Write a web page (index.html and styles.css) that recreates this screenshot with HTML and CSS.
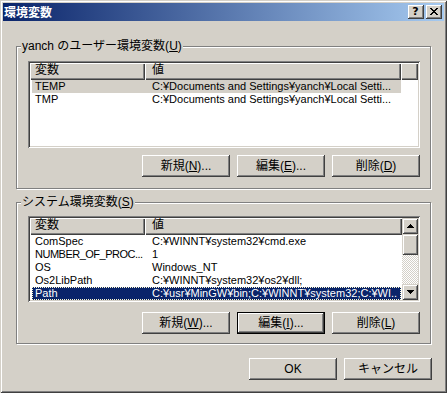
FILE: index.html
```html
<!DOCTYPE html>
<html lang="ja">
<head>
<meta charset="utf-8">
<title>環境変数</title>
<link rel="stylesheet" href="styles.css">
</head>
<body>
<div class="window">
  <div class="titlebar">
    <span class="title">環境変数</span>
    <div class="cbtns">
      <span class="cbtn q">?</span>
      <span class="cbtn">
        <svg width="8" height="7" viewBox="0 0 8 7"><path d="M0 0h2v1h-2zM6 0h2v1h-2zM1 1h2v1h-2zM5 1h2v1h-2zM2 2h4v1h-4zM3 3h2v1h-2zM2 4h4v1h-4zM1 5h2v1h-2zM5 5h2v1h-2zM0 6h2v1h-2zM6 6h2v1h-2z" fill="#000"/></svg>
      </span>
    </div>
  </div>
  <div class="client">
    <div class="group g1">
      <span class="glabel">yanch のユーザー環境変数(<u>U</u>)</span>
      <div class="list l1">
        <div class="lmain">
          <div class="lhead"><span class="hc c1">変数</span><span class="hc c2">値</span><span class="hc c3"></span></div>
          <div class="rows">
            <div class="row inactive"><span class="c1">TEMP</span><span class="c2">C:¥Documents and Settings¥yanch¥Local Setti...</span></div>
            <div class="row"><span class="c1">TMP</span><span class="c2">C:¥Documents and Settings¥yanch¥Local Setti...</span></div>
          </div>
        </div>
      </div>
      <div class="btnrow r1">
        <span class="btn">新規(<u>N</u>)...</span>
        <span class="btn">編集(<u>E</u>)...</span>
        <span class="btn">削除(<u>D</u>)</span>
      </div>
    </div>
    <div class="group g2">
      <span class="glabel">システム環境変数(<u>S</u>)</span>
      <div class="list l2">
        <div class="lmain">
          <div class="lhead"><span class="hc c1">変数</span><span class="hc c2 wide">値</span></div>
          <div class="rows">
            <div class="row"><span class="c1">ComSpec</span><span class="c2">C:¥WINNT¥system32¥cmd.exe</span></div>
            <div class="row"><span class="c1 tight">NUMBER_OF_PROC...</span><span class="c2">1</span></div>
            <div class="row"><span class="c1">OS</span><span class="c2">Windows_NT</span></div>
            <div class="row"><span class="c1">Os2LibPath</span><span class="c2">C:¥WINNT¥system32¥os2¥dll;</span></div>
            <div class="row sel"><span class="c1">Path</span><span class="c2">C:¥usr¥MinGW¥bin;C:¥WINNT¥system32;C:¥WI..</span></div>
          </div>
        </div>
        <div class="sb">
          <span class="sbtn"><svg width="7" height="4" viewBox="0 0 7 4"><path d="M3 0h1v1h-1zM2 1h3v1h-3zM1 2h5v1h-5zM0 3h7v1h-7z" fill="#000"/></svg></span>
          <span class="thumb"></span>
          <span class="track"></span>
          <span class="sbtn"><svg width="7" height="4" viewBox="0 0 7 4"><path d="M0 0h7v1h-7zM1 1h5v1h-5zM2 2h3v1h-3zM3 3h1v1h-1z" fill="#000"/></svg></span>
        </div>
      </div>
      <div class="btnrow r2">
        <span class="btn">新規(<u>W</u>)...</span>
        <span class="btn default">編集(<u>I</u>)...</span>
        <span class="btn">削除(<u>L</u>)</span>
      </div>
    </div>
    <div class="okrow">
      <span class="btn">OK</span>
      <span class="btn">キャンセル</span>
    </div>
  </div>
</div>
</body>
</html>
```
FILE: styles.css
```css
* { box-sizing: border-box; }
body {
  margin: 0;
  background: #D4D0C8;
  font-family: "Liberation Sans", "Noto Sans CJK JP", sans-serif;
  font-size: 12px;
  color: #000;
}
u { text-decoration: underline; text-underline-offset: 1px; }
.window {
  width: 447px;
  height: 393px;
  padding: 3px;
  background: #D4D0C8;
  box-shadow: inset 1px 1px 0 #D4D0C8, inset -1px -1px 0 #404040, inset 2px 2px 0 #fff, inset -2px -2px 0 #808080;
  display: flex;
  flex-direction: column;
}
.titlebar {
  height: 18px;
  flex: none;
  background: linear-gradient(to right, #0A246A, #A6CAF0);
  display: flex;
  align-items: center;
  justify-content: space-between;
  padding: 0 2px 0 1px;
}
.title {
  color: #fff;
  font-family: "Noto Sans CJK JP", sans-serif;
  font-weight: bold;
  font-size: 12px;
  line-height: 14px;
}
.cbtns { display: flex; gap: 2px; }
.cbtn {
  width: 16px;
  height: 14px;
  background: #D4D0C8;
  box-shadow: inset -1px -1px 0 #404040, inset 1px 1px 0 #fff, inset -2px -2px 0 #808080;
  display: flex;
  align-items: center;
  justify-content: center;
  padding: 0 1px 1px 0;
}
.cbtn.q {
  font-family: "DejaVu Sans", sans-serif;
  font-weight: bold;
  font-size: 11px;
  line-height: 12px;
}
.client {
  flex: 1;
  display: flex;
  flex-direction: column;
  padding: 25px 13px 0;
}
.group {
  position: relative;
  border: 1px solid #808080;
  box-shadow: 1px 1px 0 #fff, inset 1px 1px 0 #fff;
  display: flex;
  flex-direction: column;
}
.g1 { height: 143px; padding: 14px 10px 0 11px; }
.g2 { height: 142px; margin-top: 13px; padding: 13px 10px 0 11px; }
.glabel {
  position: absolute;
  left: 4px;
  top: -8px;
  background: #D4D0C8;
  padding: 0 1px;
  line-height: 14px;
  white-space: nowrap;
}
.list {
  background: #fff;
  padding: 2px;
  display: flex;
  box-shadow: inset 1px 1px 0 #808080, inset -1px -1px 0 #fff, inset 2px 2px 0 #404040, inset -2px -2px 0 #D4D0C8;
}
.l1 { height: 87px; }
.l2 { height: 86px; }
.lmain {
  flex: 1;
  min-width: 0;
  display: flex;
  flex-direction: column;
  overflow: hidden;
}
.lhead { display: flex; height: 17px; flex: none; }
.hc {
  background: #D4D0C8;
  box-shadow: inset 1px 1px 0 #fff, inset -1px -1px 0 #404040, inset -2px -2px 0 #808080;
  line-height: 15px;
  white-space: nowrap;
}
.hc.c1 { width: 115px; padding-left: 5px; }
.hc.c2 { width: 256px; padding-left: 7px; }
.hc.c2.wide { flex: 1; }
.hc.c3 { flex: 1; }
.rows { width: 371px; padding-left: 2px; }
.row {
  display: flex;
  height: 13px;
  line-height: 13px;
  font-size: 11px;
  white-space: nowrap;
}
.row .c1, .row .c2 {
  overflow-x: clip;
  overflow-y: visible;
  text-overflow: ellipsis;
  flex: none;
}
.row .c1 { width: 113px; padding-left: 3px; }
.row .c1.tight { letter-spacing: -0.5px; }
.row .c2 { width: 256px; padding-left: 7px; }
.row.inactive { background: #D4D0C8; }
.row.sel {
  background: #0A246A;
  color: #fff;
  outline: 1px dotted #fffbd0;
  outline-offset: -1px;
}
.sb { width: 16px; flex: none; display: flex; flex-direction: column; }
.sbtn, .thumb {
  background: #D4D0C8;
  box-shadow: inset 1px 1px 0 #D4D0C8, inset -1px -1px 0 #404040, inset 2px 2px 0 #fff, inset -2px -2px 0 #808080;
  flex: none;
}
.sbtn {
  height: 16px;
  display: flex;
  align-items: center;
  justify-content: center;
}
.sbtn svg { display: block; }
.thumb { height: 21px; }
.track {
  flex: 1;
  background: repeating-conic-gradient(#D4D0C8 0 25%, #fff 0 50%) 0 0 / 2px 2px;
}
.btnrow {
  display: flex;
  justify-content: flex-end;
  gap: 7px;
}
.r1 { margin-top: 7px; }
.r2 { margin-top: 10px; }
.btn {
  width: 88px;
  height: 22px;
  background: #D4D0C8;
  box-shadow: inset -1px -1px 0 #404040, inset 1px 1px 0 #fff, inset -2px -2px 0 #808080;
  display: flex;
  align-items: center;
  justify-content: center;
  line-height: 14px;
  white-space: nowrap;
}
.btn.default {
  box-shadow: inset 0 0 0 1px #000, inset -2px -2px 0 #404040, inset 2px 2px 0 #fff, inset -3px -3px 0 #808080;
}
.okrow {
  display: flex;
  justify-content: flex-end;
  gap: 7px;
  margin-top: 14px;
  margin-right: -1px;
}
```
